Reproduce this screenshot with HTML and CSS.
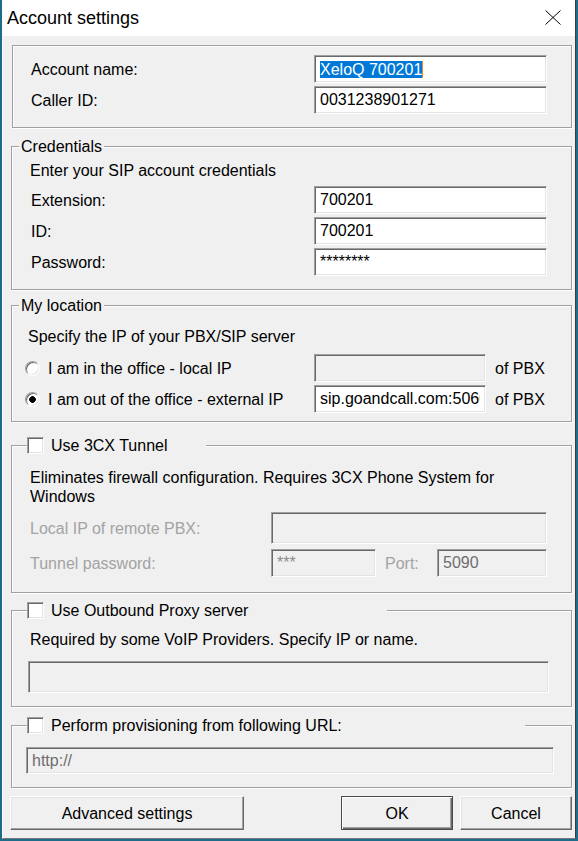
FILE: index.html
```html
<!DOCTYPE html>
<html>
	<head>
		<meta charset="UTF-8">
		<title>Account settings</title>
		<link rel="stylesheet" href="styles.css">
	</head>
	
	<body>
		<div class="window">
			<div class="titlebar">
				<span class="caption">Account settings</span>
				<svg class="close" width="16" height="15" viewBox="0 0 16 15">
					<path d="M0.5 0.5 L15.5 14.5 M15.5 0.5 L0.5 14.5" stroke="#000" stroke-width="1" fill="none"/>
				</svg>
			</div>
			
			<form class="client" method="get" onsubmit="return false;">
				<!-- Account -->
				<div class="frame account">
					<div class="field"><label class="name">Account name:</label><div class="edit focused"><span class="sel">XeloQ 700201</span></div></div>
					<div class="field"><label class="name" for="caller-id">Caller ID:</label><input class="edit" type="text" id="caller-id" value="0031238901271"></div>
				</div>
				
				<!-- SIP credentials -->
				<fieldset class="group credentials">
					<legend>Credentials</legend>
					<p class="hint">Enter your SIP account credentials</p>
					<div class="field"><label class="name" for="extension">Extension:</label><input class="edit" type="text" id="extension" value="700201"></div>
					<div class="field"><label class="name" for="auth-id">ID:</label><input class="edit" type="text" id="auth-id" value="700201"></div>
					<div class="field"><label class="name" for="password">Password:</label><input class="edit" type="text" id="password" value="********"></div>
				</fieldset>
				
				<!-- PBX location -->
				<fieldset class="group location">
					<legend>My location</legend>
					<p class="hint">Specify the IP of your PBX/SIP server</p>
					<div class="field">
						<input class="radio" type="radio" name="where" id="in-office"><label class="name" for="in-office">I am in the office - local IP</label>
						<input class="edit" type="text" value="" disabled><span class="suffix">of PBX</span>
					</div>
					<div class="field">
						<input class="radio" type="radio" name="where" id="out-office" checked><label class="name" for="out-office">I am out of the office - external IP</label>
						<input class="edit" type="text" value="sip.goandcall.com:5060"><span class="suffix">of PBX</span>
					</div>
				</fieldset>
				
				<!-- 3CX tunnel -->
				<fieldset class="group tunnel">
					<legend class="check"><input class="box" type="checkbox" id="use-tunnel"><label for="use-tunnel">Use 3CX Tunnel</label></legend>
					<p class="hint">Eliminates firewall configuration. Requires 3CX Phone System for Windows</p>
					<div class="field tall"><label class="name off">Local IP of remote PBX:</label><input class="edit remote-ip" type="text" value="" disabled></div>
					<div class="field"><label class="name off">Tunnel password:</label><input class="edit tunnel-pass" type="text" value="***" disabled><span class="name off port-label">Port:</span><input class="edit port" type="text" value="5090" disabled></div>
				</fieldset>
				
				<!-- Outbound proxy -->
				<fieldset class="group proxy">
					<legend class="check"><input class="box" type="checkbox" id="use-proxy"><label for="use-proxy">Use Outbound Proxy server</label></legend>
					<p class="hint">Required by some VoIP Providers. Specify IP or name.</p>
					<input class="edit proxy-addr" type="text" value="" disabled>
				</fieldset>
				
				<!-- Provisioning -->
				<fieldset class="group provision">
					<legend class="check"><input class="box" type="checkbox" id="use-prov"><label for="use-prov">Perform provisioning from following URL:</label></legend>
					<input class="edit prov-url" type="text" value="http://" disabled>
				</fieldset>
				
				<div class="buttons">
					<button type="button" class="advanced">Advanced settings</button>
					<span class="confirm">
						<button type="submit" class="default">OK</button>
						<button type="button">Cancel</button>
					</span>
				</div>
			</form>
		</div>
	</body>
</html>
```

FILE: styles.css
```css
html {
	background-color: #1F6C89;
}
body {
	margin: 0;
	font-family: "Liberation Sans", Arial, sans-serif;
	font-size: 16px;
	line-height: 19px;
	color: #000000;
}
p {
	margin: 0;
}
.window {
	margin-left: 2px;
	width: 574px;
	height: 839px;
	box-sizing: border-box;
	background-color: #F0F0F0;
	border-left: 1px solid #FAFAFA;
	border-right: 1px solid #3C3C3C;
	border-bottom: 1px solid #7A7A7A;
}
.titlebar {
	display: flex;
	align-items: center;
	justify-content: space-between;
	height: 36px;
	padding: 0 14px 0 4px;
	background-color: #FFFFFF;
}
.caption {
	font-size: 18px;
	padding-top: 1px;
}
.close {
	margin-top: -1px;
}
.client {
	padding: 9px 3px 0 8px;
}

/* Sunken edit boxes */
.edit {
	box-sizing: border-box;
	width: 233px;
	height: 28px;
	margin: 0;
	padding: 0 5px;
	font: inherit;
	color: #000000;
	background-color: #FFFFFF;
	border: 1px solid;
	border-color: #A0A0A0 #FFFFFF #FFFFFF #A0A0A0;
	box-shadow: inset 1px 1px #696969, inset -1px -1px #E3E3E3;
	outline: none;
}
.edit:disabled {
	background-color: #F0F0F0;
	color: #6D6D6D;
}
.edit.focused {
	display: flex;
	align-items: center;
}
.sel {
	line-height: 17px;
	color: #FFFFFF;
	background-color: #0078D7;
	border-right: 1px solid #F08A24;
}

/* Check boxes and radio buttons */
.box, .radio {
	-webkit-appearance: none;
	appearance: none;
	box-sizing: border-box;
	margin: 0;
	background-color: #FFFFFF;
	border: 1px solid;
	border-color: #A0A0A0 #FFFFFF #FFFFFF #A0A0A0;
	box-shadow: inset 1px 1px #696969, inset -1px -1px #E3E3E3;
}
.box {
	width: 17px;
	height: 17px;
	margin: 1px 7px 0 0;
	vertical-align: top;
}
.radio {
	flex: none;
	width: 15px;
	height: 15px;
	margin-right: 8px;
	border-radius: 50%;
}
.radio:checked {
	background: radial-gradient(circle, #000000 0 3px, #FFFFFF 3.6px);
}

/* Etched group frames */
.frame, .group {
	border: 1px solid #A0A0A0;
	box-shadow: inset 1px 1px #FFFFFF, 1px 1px #FFFFFF;
}
.frame {
	margin-left: 1px;
	padding: 9px 0 13px 18px;
}
.group {
	margin: 0;
	padding: 0;
	min-width: 0;
}
.group legend {
	margin-left: 7px;
	padding: 0 2px;
	line-height: 19px;
	background-color: #F0F0F0;
}
.group legend.check {
	margin-left: 15px;
	padding: 0;
}
.field {
	display: flex;
	align-items: center;
	height: 28px;
}
.field + .field {
	margin-top: 3px;
}
.name {
	flex: none;
}
.off {
	color: #A3A3A3;
}
.hint {
	margin-left: 18px;
	max-width: 470px;
}

.account .name, .credentials .name {
	width: 283px;
}
.credentials {
	margin-top: 9px;
	padding: 5px 0 13px;
}
.credentials .hint {
	margin: 0 0 6px 18px;
}
.credentials .field {
	padding-left: 19px;
}

.location {
	margin-top: 6px;
	padding: 12px 0 8px;
}
.location .hint {
	margin: 0 0 8px 16px;
}
.location .field {
	padding-left: 13px;
}
.location .name {
	width: 266px;
}
.location .edit {
	width: 172px;
}
.suffix {
	margin-left: 9px;
}

.tunnel {
	margin-top: 14px;
	padding: 13px 0 15px;
}
.tunnel legend {
	width: 179px;
}
.tunnel .hint {
	margin-bottom: 6px;
}
.tunnel .field {
	padding-left: 18px;
}
.tunnel .field + .field {
	margin-top: 5px;
}
.tunnel .field.tall {
	height: 32px;
}
.tunnel .name {
	width: 241px;
}
.tunnel .edit {
	height: 100%;
}
.tunnel .remote-ip {
	width: 276px;
}
.tunnel .tunnel-pass {
	width: 105px;
	color: #8C8C8C;
}
.tunnel .port-label {
	width: 52px;
	margin-left: 9px;
}
.tunnel .port {
	width: 110px;
}

.proxy {
	margin-top: 8px;
	padding: 10px 0 13px;
}
.proxy legend {
	width: 360px;
}
.proxy .proxy-addr {
	display: block;
	margin: 12px 0 0 16px;
	width: 521px;
	height: 32px;
}

.provision {
	margin-top: 9px;
	padding: 12px 0 13px;
}
.provision legend {
	width: 498px;
}
.provision .prov-url {
	display: block;
	margin-left: 14px;
	width: 528px;
	height: 27px;
}

.buttons {
	display: flex;
	justify-content: space-between;
	margin: 8px 0 0 -1px;
}
.confirm {
	display: flex;
	gap: 7px;
}
button {
	box-sizing: border-box;
	width: 112px;
	height: 34px;
	padding: 0;
	font: inherit;
	color: #000000;
	background-color: #F0F0F0;
	border: 1px solid;
	border-color: #FFFFFF #696969 #696969 #FFFFFF;
	box-shadow: inset -1px -1px #A0A0A0, inset 1px 1px #E3E3E3;
}
button.advanced {
	width: 234px;
}
button.default {
	border-color: #4A4A4A;
	box-shadow: inset 1px 1px #FFFFFF, inset -1px -1px #696969, inset -2px -2px #A0A0A0;
}
```
